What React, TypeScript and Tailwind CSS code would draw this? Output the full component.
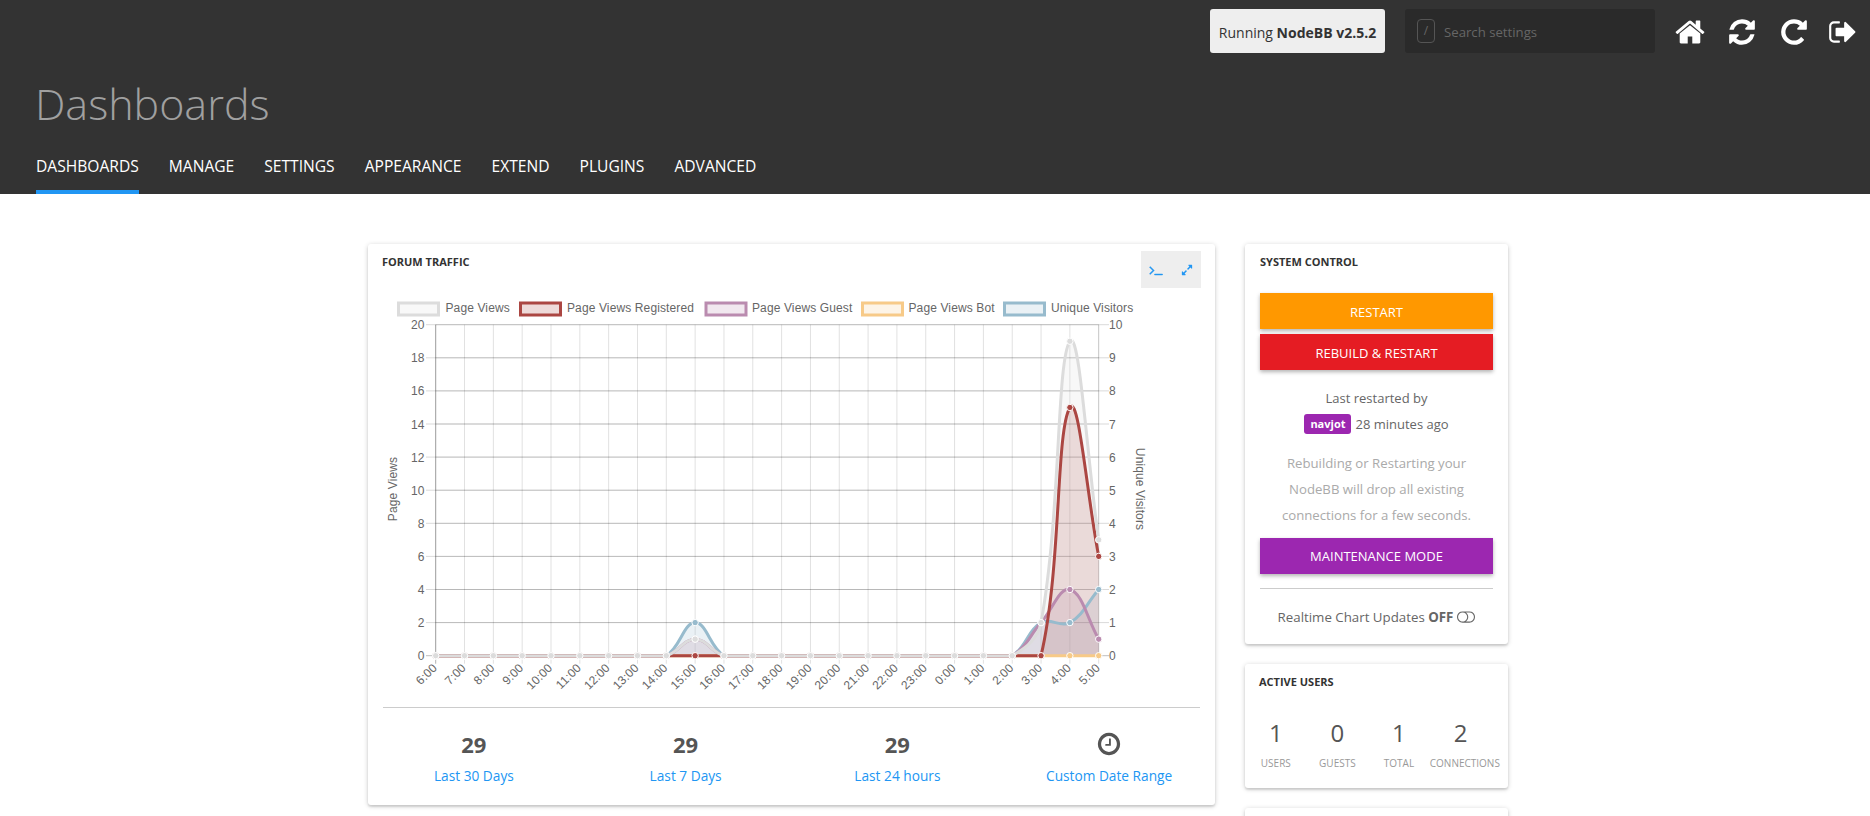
const homePath = "M1408 992v480q0 26-19 45t-45 19h-384v-384h-256v384h-384q-26 0-45-19t-19-45v-480q0-1 .5-3t.5-3l575-474 575 474q1 2 1 6zm223-69l-62 74q-8 9-21 11h-3q-13 0-21-7l-692-577-692 577q-12 8-24 7-13-2-21-11l-62-74q-8-10-7-23.500t11-21.500l719-599q32-26 76-26t76 26l244 204v-195q0-14 9-23t23-9h192q14 0 23 9t9 23v408l219 182q10 8 11 21.500t-7 23.500z"
const refreshPath = "M1639 1056q0 5-1 7-64 268-268 434.500t-478 166.500q-146 0-282.500-55t-243.500-157l-129 129q-19 19-45 19t-45-19-19-45v-448q0-26 19-45t45-19h448q26 0 45 19t19 45-19 45l-137 137q71 66 161 102t187 36q134 0 250-65t186-179q11-17 53-117 8-23 30-23h192q13 0 22.500 9.500t9.500 22.500zm25-800v448q0 26-19 45t-45 19h-448q-26 0-45-19t-19-45 19-45l138-138q-148-137-349-137-134 0-250 65t-186 179q-11 17-53 117-8 23-30 23h-199q-13 0-22.500-9.500t-9.500-22.500v-7q65-268 270-434.500t480-166.500q146 0 284 55.500t245 156.500l130-129q19-19 45-19t45 19 19 45z"
const repeatPath = "M1664 256v448q0 26-19 45t-45 19h-448q-42 0-59-40-17-39 14-69l138-138q-148-137-349-137-104 0-198.500 40.500t-163.500 109.500-109.500 163.500-40.500 198.500 40.500 198.500 109.500 163.500 163.500 109.500 198.500 40.500q119 0 225-52t179-147q7-10 23-12 15 0 25 9l137 138q9 8 9.500 20.500t-7.500 22.500q-109 132-264 204.500t-327 72.500q-156 0-298-61t-245-164-164-245-61-298 61-298 164-245 245-164 298-61q147 0 284.500 55.500t244.500 156.500l130-129q29-31 70-14 39 17 39 59z"
const signOutPath = "M704 1440q0 4 1 20t.5 26.500-3 23.500-10 19.500-20.500 6.500h-320q-119 0-203.500-84.500t-84.500-203.500v-704q0-119 84.500-203.500t203.500-84.500h320q13 0 22.500 9.500t9.500 22.500q0 4 1 20t.5 26.500-3 23.500-10 19.500-20.500 6.500h-320q-66 0-113 47t-47 113v704q0 66 47 113t113 47h312l11.500 1 11.500 3 8 5.500 7 9 2 13.500zm928-544q0 26-19 45l-544 544q-19 19-45 19t-45-19-19-45v-288h-448q-26 0-45-19t-19-45v-384q0-26 19-45t45-19h448v-288q0-26 19-45t45-19 45 19l544 544q19 19 19 45z"
const terminalPath = "M649 983l-466 466q-10 10-23 10t-23-10l-50-50q-10-10-10-23t10-23l393-393-393-393q-10-10-10-23t10-23l50-50q10-10 23-10t23 10l466 466q10 10 10 23t-10 23zm1079 457v64q0 14-9 23t-23 9h-960q-14 0-23-9t-9-23v-64q0-14 9-23t23-9h960q14 0 23 9t9 23z"
const expandPath = "M883 1056q0 13-10 23l-332 332 144 144q19 19 19 45t-19 45-45 19h-448q-26 0-45-19t-19-45v-448q0-26 19-45t45-19 45 19l144 144 332-332q10-10 23-10t23 10l114 114q10 10 10 23zm781-864v448q0 26-19 45t-45 19-45-19l-144-144-332 332q-10 10-23 10t-23-10l-114-114q-10-10-10-23t10-23l332-332-144-144q-19-19-19-45t19-45 45-19h448q26 0 45 19t19 45z"
const clockPath = "M1024 544v448q0 14-9 23t-23 9h-320q-14 0-23-9t-9-23v-64q0-14 9-23t23-9h224v-352q0-14 9-23t23-9h64q14 0 23 9t9 23zm416 352q0-148-73-273t-198-198-273-73-273 73-198 198-73 273 73 273 198 198 273 73 273-73 198-198 73-273zm224 0q0 209-103 385.500t-279.500 279.500-385.500 103-385.500-103-279.500-279.500-103-385.500 103-385.500 279.500-279.500 385.500-103 385.500 103 279.500 279.500 103 385.500z"
const togglePath = "M1152 896q0-104-40.500-198.500t-109.500-163.500-163.500-109.500-198.500-40.500-198.500 40.500-163.500 109.500-109.500 163.500-40.500 198.500 40.500 198.500 109.500 163.500 163.500 109.500 198.500 40.500 198.500-40.500 163.500-109.500 109.500-163.500 40.500-198.500zm768 0q0-104-40.500-198.500t-109.500-163.500-163.500-109.500-198.500-40.500h-386q119 90 188.500 224t69.500 288-69.500 288-188.500 224h386q104 0 198.500-40.500t163.500-109.500 109.500-163.500 40.500-198.500zm128 0q0 130-51 248.500t-136.500 204-204 136.500-248.500 51h-768q-130 0-248.500-51t-204-136.500-136.500-204-51-248.500 51-248.500 136.500-204 204-136.500 248.500-51h768q130 0 248.500 51t204 136.500 136.500 204 51 248.500z"

const navItems = ["Dashboards", "Manage", "Settings", "Appearance", "Extend", "Plugins", "Advanced"]
const hours = ["6:00", "7:00", "8:00", "9:00", "10:00", "11:00", "12:00", "13:00", "14:00", "15:00", "16:00", "17:00", "18:00", "19:00", "20:00", "21:00", "22:00", "23:00", "0:00", "1:00", "2:00", "3:00", "4:00", "5:00"]

const LEFT = 435.7
const RIGHT = 1098.7
const TOP = 324.7
const BOTTOM = 655.7
const stepX = (RIGHT - LEFT) / 23
const unitY = (BOTTOM - TOP) / 20

const series = (peaks: Record<number, number>) => hours.map((_, i) => peaks[i] ?? 0)

const datasets = [
  { label: "Page Views", rgb: "220,220,220", values: series({ 9: 1, 21: 2, 22: 19, 23: 7 }), boxX: 398.5, textX: 445.5 },
  { label: "Page Views Registered", rgb: "171,70,66", values: series({ 22: 15, 23: 6 }), boxX: 520.5, textX: 567 },
  { label: "Page Views Guest", rgb: "186,139,175", values: series({ 9: 1, 21: 2, 22: 4, 23: 1 }), boxX: 706, textX: 752 },
  { label: "Page Views Bot", rgb: "247,202,136", values: series({}), boxX: 862.5, textX: 908.5 },
  { label: "Unique Visitors", rgb: "151,187,205", values: series({ 9: 2, 21: 2, 22: 2, 23: 4 }), boxX: 1004.5, textX: 1051 },
]

const clamp = (v: number, min: number, max: number) => Math.min(max, Math.max(min, v))

function buildLine(values: number[]) {
  const pts = values.map((v, i) => ({ x: LEFT + i * stepX, y: BOTTOM - v * unitY }))
  const ctrl = pts.map((p, i) => {
    const a = pts[i - 1] ?? p
    const b = pts[i + 1] ?? p
    const d01 = Math.hypot(p.x - a.x, p.y - a.y)
    const d12 = Math.hypot(b.x - p.x, b.y - p.y)
    const sum = d01 + d12 || 1
    const fa = (0.4 * d01) / sum
    const fb = (0.4 * d12) / sum
    return {
      px: clamp(p.x - fa * (b.x - a.x), LEFT, RIGHT),
      py: clamp(p.y - fa * (b.y - a.y), TOP, BOTTOM),
      nx: clamp(p.x + fb * (b.x - a.x), LEFT, RIGHT),
      ny: clamp(p.y + fb * (b.y - a.y), TOP, BOTTOM),
    }
  })
  let d = `M${pts[0].x} ${pts[0].y}`
  for (let i = 1; i < pts.length; i++) {
    d += `C${ctrl[i - 1].nx} ${ctrl[i - 1].ny} ${ctrl[i].px} ${ctrl[i].py} ${pts[i].x} ${pts[i].y}`
  }
  return { pts, d }
}

function Chart() {
  const lines = [...datasets].reverse().map((ds) => ({ ...ds, ...buildLine(ds.values) }))

  return (
    <svg viewBox="368 290 847 415" className="block h-[415px] w-[847px] font-['Liberation_Sans',Arial,sans-serif] text-[12px] tracking-[0.12px]">
      {datasets.map((ds) => (
        <g key={ds.label}>
          <rect x={ds.boxX} y={303} width={40} height={12} fill={`rgba(${ds.rgb},0.2)`} stroke={`rgb(${ds.rgb})`} strokeWidth={3} />
          <text x={ds.textX} y={312} className="fill-[#666]">{ds.label}</text>
        </g>
      ))}

      {Array.from({ length: 11 }, (_, i) => {
        const y = BOTTOM - i * 2 * unitY
        const alpha = i === 0 ? 0.25 : 0.15
        return (
          <g key={i}>
            <line x1={426} x2={RIGHT} y1={y} y2={y} stroke={`rgba(0,0,0,${alpha})`} />
            <line x1={LEFT} x2={1109} y1={y} y2={y} stroke={`rgba(0,0,0,${alpha})`} />
            <text x={424.5} y={y + 4.5} textAnchor="end" className="fill-[#666]">{i * 2}</text>
            <text x={1109} y={y + 4.5} className="fill-[#666]">{i}</text>
          </g>
        )
      })}

      {hours.map((h, i) => {
        const x = LEFT + i * stepX
        return (
          <g key={h}>
            <line x1={x} x2={x} y1={TOP} y2={BOTTOM + 8} stroke={i === 0 ? "rgba(0,0,0,0.3)" : "rgba(0,0,0,0.12)"} />
            <text transform={`translate(${x + 2} ${BOTTOM + 13}) rotate(-45)`} textAnchor="end" className="fill-[#666]">{h}</text>
          </g>
        )
      })}
      <line x1={LEFT} x2={LEFT} y1={TOP} y2={BOTTOM} stroke="rgba(0,0,0,0.12)" />
      <line x1={RIGHT} x2={RIGHT} y1={TOP} y2={BOTTOM} stroke="rgba(0,0,0,0.12)" />

      <text transform="translate(397 489) rotate(-90)" textAnchor="middle" className="fill-[#666]">Page Views</text>
      <text transform="translate(1136 489) rotate(90)" textAnchor="middle" className="fill-[#666]">Unique Visitors</text>

      {lines.map((ds) => (
        <path key={ds.label} d={`${ds.d}L${RIGHT} ${BOTTOM}L${LEFT} ${BOTTOM}Z`} fill={`rgba(${ds.rgb},0.2)`} />
      ))}
      {lines.map((ds) => (
        <g key={ds.label}>
          <path d={ds.d} fill="none" stroke={`rgb(${ds.rgb})`} strokeWidth={3} />
          {ds.pts.map((p, i) => (
            <circle key={i} cx={p.x} cy={p.y} r={3.2} fill={`rgb(${ds.rgb})`} stroke="#fff" strokeWidth={1} />
          ))}
        </g>
      ))}
    </svg>
  )
}

function Stat({ value, label }: { value: string; label: string }) {
  return (
    <div className="flex flex-col items-center">
      <div className="flex h-[30px] items-center text-[22px] font-bold text-[#555]">{value}</div>
      <a className="mt-[8px] text-[13.7px] leading-[18px] text-[#2196f3]">{label}</a>
    </div>
  )
}

function Card({ children, className }: { children?: React.ReactNode; className?: string }) {
  return (
    <div className={`rounded-[3px] bg-white shadow-[0_1px_5px_rgba(0,0,0,0.2),0_2px_2px_rgba(0,0,0,0.1)] ${className ?? ""}`}>
      {children}
    </div>
  )
}

function PanelTitle({ children }: { children: string }) {
  return <h3 className="text-[11px] font-bold uppercase leading-[16px] text-[#333]">{children}</h3>
}

function ActiveCount({ value, label }: { value: number; label: string }) {
  return (
    <div className="w-[61.6px] text-center">
      <div className="text-[24px] leading-[32px] text-[#555]">{value}</div>
      <div className="mt-[7px] whitespace-nowrap text-[10px] uppercase leading-[14px] text-[#999]">{label}</div>
    </div>
  )
}

export default function App() {
  return (
    <div className="h-[816px] overflow-hidden bg-white font-['Open_Sans',sans-serif]">
      <header className="flex h-[194px] flex-col bg-[#333]">
        <div className="flex items-start pl-[1210px] pt-[9px]">
          <div className="flex h-[44px] w-[175px] items-center justify-center whitespace-nowrap rounded-[3px] bg-[#eee] pt-[3px] text-[14px] text-[#333]">
            Running&nbsp;<b>NodeBB v2.5.2</b>
          </div>
          <div className="ml-[20px] flex h-[44px] w-[250px] items-center rounded-[3px] bg-[#2a2a2a] pl-[12px] text-[13.2px] text-[#666]">
            <span className="flex h-[24px] w-[18px] items-center justify-center rounded-[4px] border border-[#555] text-[12px]">/</span>
            <span className="ml-[9px] pt-[3px]">Search settings</span>
          </div>
          <div className="ml-[20px] flex items-center text-white">
            <svg viewBox="0 0 1664 1792" className="mt-[7px] h-[32px] w-[30px] fill-current"><path d={homePath} /></svg>
            <svg viewBox="0 0 1792 1792" className="ml-[22px] mt-[7px] h-[30px] w-[30px] fill-current"><path d={refreshPath} /></svg>
            <svg viewBox="0 0 1792 1792" className="ml-[22px] mt-[7px] h-[30px] w-[30px] fill-current"><path d={repeatPath} /></svg>
            <svg viewBox="0 0 1664 1792" className="ml-[19px] mt-[7px] h-[30px] w-[28px] fill-current"><path d={signOutPath} /></svg>
          </div>
        </div>
        <h1 className="ml-[35px] mt-[21px] text-[43px] font-light leading-[60px] text-[#a0a0a0]">Dashboards</h1>
        <nav className="ml-[36px] mt-auto flex gap-[30px]">
          {navItems.map((item, i) => (
            <a key={item} className={`border-b-4 pb-[14px] text-[15.6px] uppercase leading-[20px] text-white ${i === 0 ? "border-[#2196f3]" : "border-transparent"}`}>
              {item}
            </a>
          ))}
        </nav>
      </header>

      <main className="ml-[368px] mt-[50px] flex w-[1140px] items-start gap-[30px]">
        <Card className="h-[561px] w-[847px]">
          <div className="flex h-[46px] items-start justify-between pl-[14px] pr-[14px]">
            <div className="pt-[10px]"><PanelTitle>Forum Traffic</PanelTitle></div>
            <div className="mt-[7px] flex h-[37px] w-[60px] items-center justify-between bg-[#eee] px-[8px] text-[#2196f3]">
              <svg viewBox="0 0 1792 1792" className="h-[14px] w-[14px] fill-current stroke-current stroke-[60]"><path d={terminalPath} /></svg>
              <svg viewBox="0 0 1792 1792" className="h-[12px] w-[12px] fill-current"><path d={expandPath} /></svg>
            </div>
          </div>
          <Chart />
          <div className="mx-[15px] mt-[2px] border-t border-[#ccc]" />
          <div className="mt-[21px] grid grid-cols-4">
            <Stat value="29" label="Last 30 Days" />
            <Stat value="29" label="Last 7 Days" />
            <Stat value="29" label="Last 24 hours" />
            <div className="flex flex-col items-center">
              <svg viewBox="0 0 1792 1792" className="h-[30px] w-[26px] fill-[#555]"><path d={clockPath} /></svg>
              <a className="mt-[8px] text-[13.7px] leading-[18px] text-[#2196f3]">Custom Date Range</a>
            </div>
          </div>
        </Card>

        <div className="flex w-[263px] flex-col gap-[20px]">
          <Card className="h-[400px] px-[15px]">
            <div className="pt-[10px]"><PanelTitle>System Control</PanelTitle></div>
            <button className="mt-[23px] block h-[36px] w-[233px] bg-[#ff9800] pt-[3px] text-[13px] uppercase text-white shadow-[0_2px_4px_rgba(0,0,0,0.3)]">Restart</button>
            <button className="mt-[5px] block h-[36px] w-[233px] bg-[#e51c23] pt-[3px] text-[13px] uppercase text-white shadow-[0_2px_4px_rgba(0,0,0,0.3)]">Rebuild &amp; Restart</button>
            <p className="mt-[15px] text-center text-[13px] leading-[26px] text-[#666]">
              Last restarted by
              <br />
              <span className="mr-[4px] inline-block rounded-[3px] bg-[#9c27b0] px-[6px] align-[1px] text-[11px] font-bold leading-[20px] text-white">navjot</span>
              28 minutes ago
            </p>
            <p className="mt-[13px] text-center text-[13.2px] leading-[26px] text-[#aaa]">
              Rebuilding or Restarting your
              <br />
              NodeBB will drop all existing
              <br />
              connections for a few seconds.
            </p>
            <button className="mt-[10px] block h-[36px] w-[233px] bg-[#9c27b0] pt-[2px] text-[13px] uppercase text-white shadow-[0_2px_4px_rgba(0,0,0,0.3)]">Maintenance Mode</button>
            <div className="mt-[14px] border-t border-[#ccc]" />
            <div className="mt-[18px] flex items-center justify-center text-[13.3px] leading-[20px] text-[#666]">
              Realtime Chart Updates&nbsp;<b>OFF</b>
              <svg viewBox="0 0 2048 1792" className="ml-[4px] h-[16px] w-[18px] fill-current"><path d={togglePath} /></svg>
            </div>
          </Card>

          <Card className="h-[124px]">
            <div className="pl-[14px] pt-[10px]"><PanelTitle>Active Users</PanelTitle></div>
            <div className="mt-[27px] flex">
              <ActiveCount value={1} label="Users" />
              <ActiveCount value={0} label="Guests" />
              <ActiveCount value={1} label="Total" />
              <ActiveCount value={2} label="Connections" />
            </div>
          </Card>

          <Card className="h-[100px]" />
        </div>
      </main>
    </div>
  )
}
